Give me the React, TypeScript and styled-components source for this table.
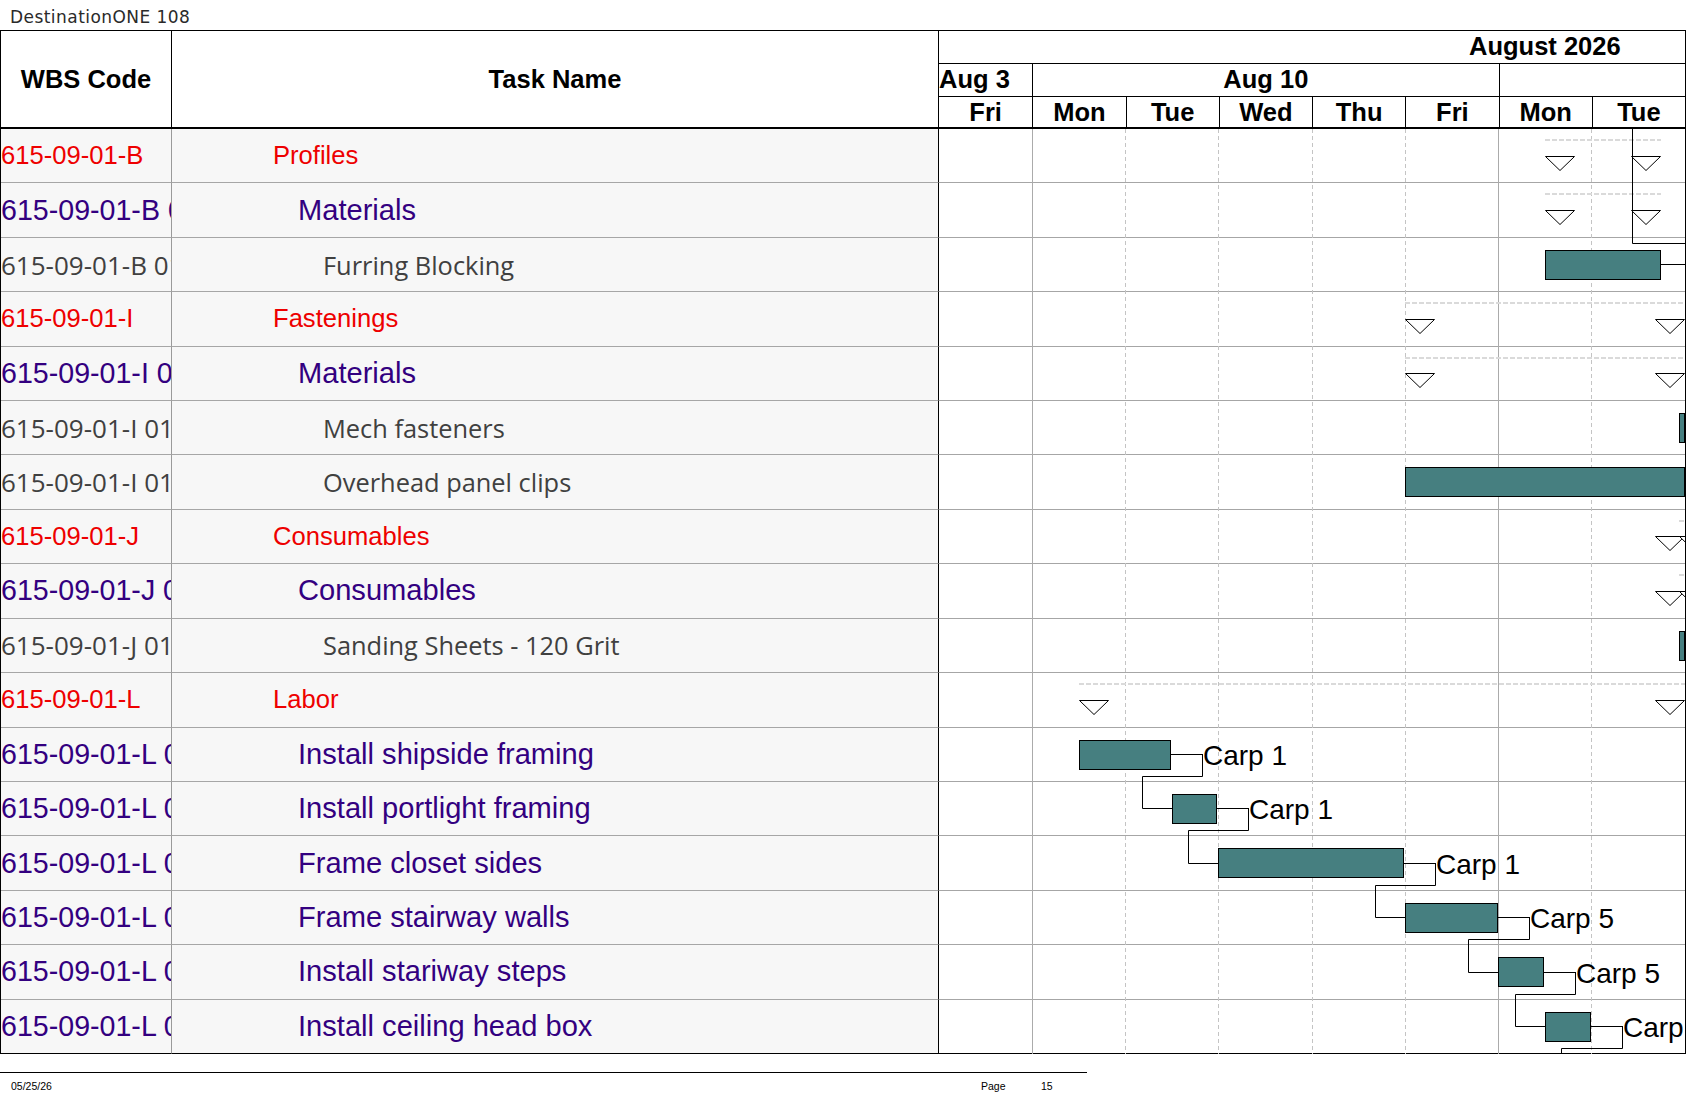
import React from 'react';
import styled, { createGlobalStyle, css } from 'styled-components';

const GlobalStyle = createGlobalStyle`
  html, body { margin: 0; padding: 0; background: #fff; }
  body { font-family: "Liberation Sans", Arial, sans-serif; }
`;

type Level = 1 | 2 | 3;

interface RowData {
  wbs: string;
  name: string;
  level: Level;
}

const rows: RowData[] = [
  { wbs: '615-09-01-B', name: 'Profiles', level: 1 },
  { wbs: '615-09-01-B 01', name: 'Materials', level: 2 },
  { wbs: '615-09-01-B 01 01', name: 'Furring Blocking', level: 3 },
  { wbs: '615-09-01-I', name: 'Fastenings', level: 1 },
  { wbs: '615-09-01-I 01', name: 'Materials', level: 2 },
  { wbs: '615-09-01-I 01 01', name: 'Mech fasteners', level: 3 },
  { wbs: '615-09-01-I 01 02', name: 'Overhead panel clips', level: 3 },
  { wbs: '615-09-01-J', name: 'Consumables', level: 1 },
  { wbs: '615-09-01-J 01', name: 'Consumables', level: 2 },
  { wbs: '615-09-01-J 01 01', name: 'Sanding Sheets - 120 Grit', level: 3 },
  { wbs: '615-09-01-L', name: 'Labor', level: 1 },
  { wbs: '615-09-01-L 01', name: 'Install shipside framing', level: 2 },
  { wbs: '615-09-01-L 02', name: 'Install portlight framing', level: 2 },
  { wbs: '615-09-01-L 03', name: 'Frame closet sides', level: 2 },
  { wbs: '615-09-01-L 04', name: 'Frame stairway walls', level: 2 },
  { wbs: '615-09-01-L 05', name: 'Install stariway steps', level: 2 },
  { wbs: '615-09-01-L 06', name: 'Install ceiling head box', level: 2 },
];

const DAY = 93.25;
const GANTT_W = 746;
const BODY_H = 925;
const ROW_H = BODY_H / rows.length;
const rowTop = (i: number) => i * ROW_H;

const levelFont = (level: Level, wbs: boolean) => {
  if (level === 1)
    return css`
      font-family: "Liberation Sans", Arial, sans-serif;
      font-size: 25.6px;
      color: #ee0000;
    `;
  if (level === 2)
    return css`
      font-family: "Liberation Sans", Arial, sans-serif;
      font-size: ${wbs ? 28.6 : 29.1}px;
      color: #330080;
    `;
  return css`
    font-family: "Open Sans", "Liberation Sans", sans-serif;
    font-size: ${wbs ? 26 : 25.4}px;
    color: #404040;
  `;
};

const taskIndent: Record<Level, number> = { 1: 101, 2: 126, 3: 151 };

const Page = styled.div`
  width: 1687px;
  height: 1097px;
  overflow: hidden;
  background: #fff;
`;

const TitleBar = styled.div`
  height: 30px;
  box-sizing: border-box;
  padding: 3px 0 0 10px;
  display: flex;
  align-items: center;
  font-family: "DejaVu Sans", sans-serif;
  font-size: 17px;
  letter-spacing: 0.45px;
  color: #2a2a2a;
`;

const Sheet = styled.div`
  width: 1686px;
  box-sizing: border-box;
  border: 1px solid #000;
  border-bottom: none;
`;

const Header = styled.div`
  display: flex;
  height: 98px;
  box-sizing: border-box;
  border-bottom: 2px solid #000;
`;

const HeadCell = styled.div<{ $w: number }>`
  width: ${(p) => p.$w}px;
  box-sizing: border-box;
  border-right: 1px solid #000;
  display: flex;
  align-items: center;
  justify-content: center;
  font-family: "Liberation Sans", Arial, sans-serif;
  font-weight: bold;
  font-size: 25.5px;
  color: #000;
`;

const GanttHead = styled.div`
  width: ${GANTT_W}px;
  display: flex;
  flex-direction: column;
  font-family: "Liberation Sans", Arial, sans-serif;
  font-weight: bold;
  font-size: 25.5px;
  color: #000;
`;

const MonthRow = styled.div`
  height: 33px;
  box-sizing: border-box;
  border-bottom: 1px solid #000;
  display: flex;
  align-items: center;
  padding-left: 530px;
  padding-bottom: 1px;
`;

const WeekRow = styled.div`
  height: 33px;
  box-sizing: border-box;
  border-bottom: 1px solid #000;
  display: flex;
`;

const WeekCell = styled.div<{ $days: number; $first?: boolean; $align: 'flex-start' | 'center' }>`
  width: ${(p) => p.$days * DAY}px;
  box-sizing: border-box;
  border-left: ${(p) => (p.$first ? 'none' : '1px solid #000')};
  display: flex;
  align-items: center;
  justify-content: ${(p) => p.$align};
  padding-bottom: 2px;
  overflow: hidden;
  white-space: nowrap;
  &:last-child {
    flex: 1;
  }
`;

const DayRow = styled.div`
  height: 30px;
  display: flex;
`;

const DayCell = styled.div`
  width: ${DAY}px;
  box-sizing: border-box;
  border-left: 1px solid #000;
  display: flex;
  align-items: center;
  justify-content: center;
  &:first-child {
    border-left: none;
  }
`;

const Body = styled.div`
  position: relative;
  display: grid;
  grid-template-columns: 171px 767px ${GANTT_W}px;
  grid-template-rows: repeat(${rows.length}, 1fr);
  height: ${BODY_H}px;
`;

const Cell = styled.div<{ $last: boolean }>`
  box-sizing: border-box;
  min-width: 0;
  overflow: hidden;
  border-bottom: 1px solid ${(p) => (p.$last ? '#000' : '#a6a6a6')};
`;

const WbsCell = styled(Cell)<{ $level: Level }>`
  background: #f7f7f7;
  border-right: 1px solid #9a9a9a;
  display: flex;
  align-items: center;
  white-space: nowrap;
  padding-left: 0;
  ${(p) => levelFont(p.$level, true)}
`;

const TaskCell = styled(Cell)<{ $level: Level }>`
  background: #f7f7f7;
  border-right: 1px solid #000;
  display: flex;
  align-items: center;
  white-space: nowrap;
  padding-left: ${(p) => taskIndent[p.$level]}px;
  ${(p) => levelFont(p.$level, false)}
`;

const GanttCell = styled(Cell)`
  background: #fff;
`;

const GanttLayer = styled.div`
  position: absolute;
  left: 938px;
  top: 0;
  width: ${GANTT_W}px;
  height: ${BODY_H}px;
  overflow: hidden;
  pointer-events: none;
`;

const GanttSvg = styled.svg`
  position: absolute;
  left: 0;
  top: 0;
  display: block;
`;

const BarLabel = styled.span`
  position: absolute;
  transform: translateY(-50%);
  font-family: "Liberation Sans", Arial, sans-serif;
  font-size: 28px;
  line-height: 1;
  color: #000;
  white-space: nowrap;
`;

const FooterRule = styled.div`
  margin-top: 18px;
  width: 1087px;
  border-top: 1px solid #000;
`;

const FooterRow = styled.div`
  display: flex;
  align-items: center;
  height: 26px;
  font-family: "Liberation Sans", Arial, sans-serif;
  font-size: 10.5px;
  color: #000;
`;

const FooterDate = styled.span`
  width: 970px;
  padding-left: 11px;
`;

const FooterPage = styled.span`
  width: 60px;
`;

/* ---------- gantt data ---------- */

interface Summary {
  row: number;
  start: number;
  end: number;
}

const summaries: Summary[] = [
  { row: 0, start: 606, end: 722 },
  { row: 1, start: 606, end: 722 },
  { row: 3, start: 466, end: 746 },
  { row: 4, start: 466, end: 746 },
  { row: 7, start: 740, end: 746 },
  { row: 8, start: 740, end: 746 },
  { row: 10, start: 140, end: 746 },
];

interface Bar {
  row: number;
  x1: number;
  x2: number;
  label?: string;
}

const bars: Bar[] = [
  { row: 2, x1: 606, x2: 722 },
  { row: 5, x1: 740, x2: 746 },
  { row: 6, x1: 466, x2: 746 },
  { row: 9, x1: 740, x2: 746 },
  { row: 11, x1: 140, x2: 232, label: 'Carp 1' },
  { row: 12, x1: 233, x2: 278, label: 'Carp 1' },
  { row: 13, x1: 279, x2: 465, label: 'Carp 1' },
  { row: 14, x1: 466, x2: 559, label: 'Carp 5' },
  { row: 15, x1: 559, x2: 605, label: 'Carp 5' },
  { row: 16, x1: 606, x2: 652, label: 'Carp 5' },
];

const TRI_W = 29;
const TRI_H = 14;
const px = (v: number) => Math.round(v) + 0.5;

const triangle = (x: number, top: number) =>
  `${x},${top} ${x + TRI_W},${top} ${x + TRI_W / 2},${top + TRI_H}`;

const GanttDrawing: React.FC = () => {
  const gridLines = [1, 2, 3, 4, 5, 6, 7].map((k) => {
    const x = Math.floor(k * DAY) + 0.5;
    const solid = k === 1 || k === 6;
    return (
      <line
        key={k}
        x1={x}
        x2={x}
        y1={0}
        y2={BODY_H}
        stroke={solid ? '#ababab' : '#c4c4c4'}
        strokeWidth={1}
        strokeDasharray={solid ? undefined : '4 3'}
      />
    );
  });

  const summaryEls = summaries.map((s) => {
    const t = rowTop(s.row);
    const dashY = Math.round(t + 11);
    const triTop = px(t + 26.5);
    return (
      <g key={`s${s.row}`}>
        <line x1={s.start} x2={s.end} y1={dashY} y2={dashY} stroke="#dadada" strokeWidth={2} strokeDasharray="5 2" />
        <polygon points={triangle(s.end - TRI_W - 0.5, triTop)} fill="#fff" stroke="#000" strokeWidth={1} />
        <polygon points={triangle(s.start + 0.5, triTop)} fill="#fff" stroke="#000" strokeWidth={1} />
      </g>
    );
  });

  const barEls = bars.map((b) => {
    const t = rowTop(b.row);
    const y = px(t + 12);
    return (
      <rect
        key={`b${b.row}`}
        x={b.x1 + 0.5}
        y={y}
        width={b.x2 - b.x1 - 1}
        height={29}
        fill="#467f80"
        stroke="#000"
        strokeWidth={1}
      />
    );
  });

  const labelled = bars.filter((b) => b.label);
  const connectors: string[] = [];
  labelled.forEach((b, idx) => {
    const t = rowTop(b.row);
    const cy = px(t + 26.5);
    const lx = b.x2 + 32;
    connectors.push(`M ${b.x2} ${cy} H ${lx}`);
    const next = labelled[idx + 1];
    const downY = px(t + ROW_H - 6);
    if (next) {
      const ncy = px(rowTop(next.row) + 26.5);
      const elbow = next.x1 - 30 + 0.5;
      connectors.push(`M ${lx - 0.5} ${cy} V ${downY} H ${elbow} V ${ncy} H ${next.x1}`);
    } else {
      connectors.push(`M ${lx - 0.5} ${cy} V ${downY} H ${Math.floor(7 * DAY - 30) + 0.5} V ${BODY_H + 10}`);
    }
  });
  connectors.push(`M 693.5 0 V ${px(rowTop(2) + 5)} H ${GANTT_W}`);
  connectors.push(`M 722 ${px(rowTop(2) + 26.5)} H ${GANTT_W}`);

  return (
    <GanttLayer>
      <GanttSvg width={GANTT_W} height={BODY_H} viewBox={`0 0 ${GANTT_W} ${BODY_H}`}>
        {gridLines}
        {summaryEls}
        {barEls}
        {connectors.map((d, i) => (
          <path key={`c${i}`} d={d} fill="none" stroke="#000" strokeWidth={1} />
        ))}
      </GanttSvg>
      {labelled.map((b) => (
        <BarLabel key={`l${b.row}`} style={{ left: b.x2 + 32, top: rowTop(b.row) + 28.5 }}>
          {b.label}
        </BarLabel>
      ))}
    </GanttLayer>
  );
};

const days = ['Fri', 'Mon', 'Tue', 'Wed', 'Thu', 'Fri', 'Mon', 'Tue'];

const App: React.FC = () => (
  <Page>
    <GlobalStyle />
    <TitleBar>DestinationONE 108</TitleBar>
    <Sheet>
      <Header>
        <HeadCell $w={171}>WBS Code</HeadCell>
        <HeadCell $w={767}>Task Name</HeadCell>
        <GanttHead>
          <MonthRow>August 2026</MonthRow>
          <WeekRow>
            <WeekCell $days={1} $first $align="flex-start">Aug 3</WeekCell>
            <WeekCell $days={5} $align="center">Aug 10</WeekCell>
            <WeekCell $days={2} $align="center" />
          </WeekRow>
          <DayRow>
            {days.map((d, i) => (
              <DayCell key={i}>{d}</DayCell>
            ))}
          </DayRow>
        </GanttHead>
      </Header>
      <Body>
        {rows.map((r, i) => {
          const last = i === rows.length - 1;
          return (
            <React.Fragment key={i}>
              <WbsCell $last={last} $level={r.level}>{r.wbs}</WbsCell>
              <TaskCell $last={last} $level={r.level}>{r.name}</TaskCell>
              <GanttCell $last={last} />
            </React.Fragment>
          );
        })}
        <GanttDrawing />
      </Body>
    </Sheet>
    <FooterRule />
    <FooterRow>
      <FooterDate>05/25/26</FooterDate>
      <FooterPage>Page</FooterPage>
      <span>15</span>
    </FooterRow>
  </Page>
);

export default App;
